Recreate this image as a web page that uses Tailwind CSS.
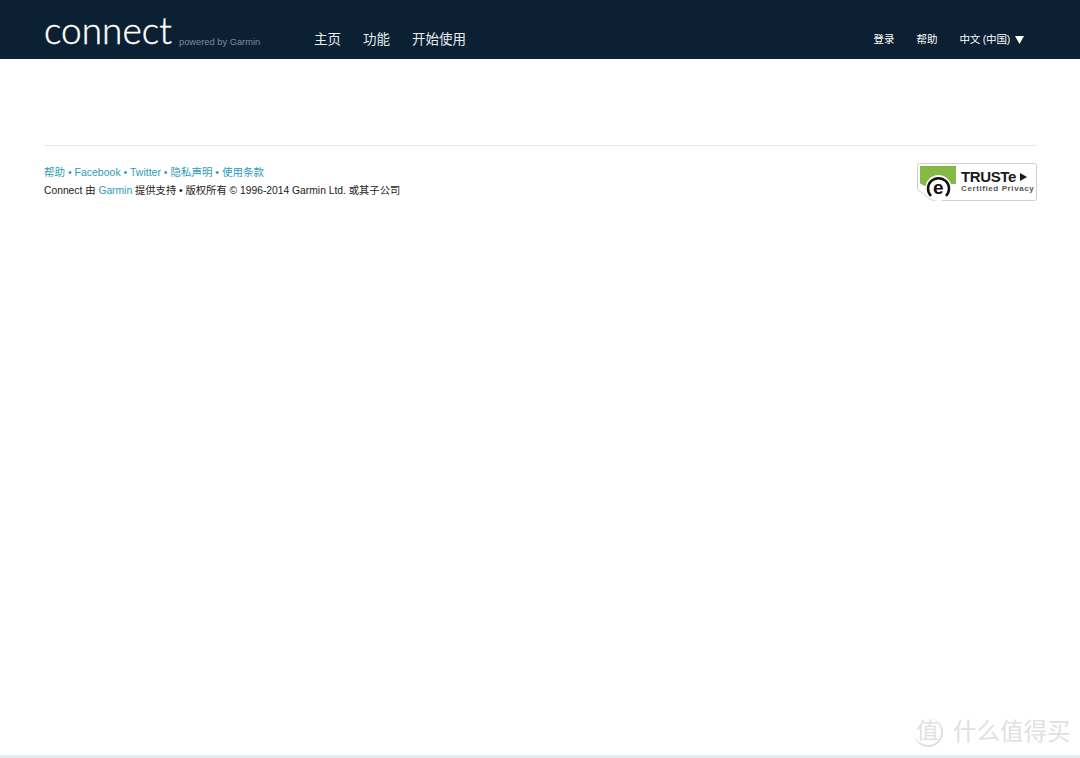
<!DOCTYPE html>
<html lang="zh-CN">
<head>
    <meta charset="UTF-8">
    <title>Garmin Connect</title>
    <script src="https://cdn.jsdelivr.net/npm/@tailwindcss/browser@4"></script>
</head>
<body class="relative flex flex-col h-[758px] w-[1080px] overflow-hidden bg-white font-['Liberation_Sans','Noto_Sans_CJK_SC',sans-serif] text-[10.5px] text-[#1a1a1a]">

    <!-- header -->
    <header class="flex items-center h-[59px] bg-[#0b2032] text-white shrink-0 pl-[44px] pr-[56px] pt-[20px]">
        <a href="#" class="flex items-baseline w-[270px] h-[40px] -mt-[20px]">
            <span class="font-['Lato',sans-serif] font-light text-[37px] leading-[40px] w-[135px] [-webkit-text-stroke:0.4px_white]">connect</span>
            <span class="text-[9.300px] text-[#7f8c96] translate-y-[1px]">powered by Garmin</span>
        </a>
        <nav class="flex gap-[22px] text-[13.5px] text-[#e8ecef] mt-[2px]">
            <a href="#">主页</a>
            <a href="#">功能</a>
            <a href="#">开始使用</a>
        </nav>
        <div class="flex items-center gap-[22px] ml-auto">
            <a href="#">登录</a>
            <a href="#">帮助</a>
            <a href="#" class="flex items-center gap-[5px] tracking-[-0.2px]">
                中文 (中国)
                <svg width="9" height="8" viewBox="0 0 9 8"><polygon points="0,0 9,0 4.5,8" fill="#fff"/></svg>
            </a>
        </div>
    </header>

    <!-- footer block -->
    <main class="mx-[44px] mt-[86px] w-[993px] border-t border-[#e8e8e8] flex justify-between pt-[17px]">
        <div class="flex flex-col gap-[7px] leading-[12px] pt-[3px]">
            <p class="text-[#2d9bb8]">
                <a href="#">帮助</a> • <a href="#">Facebook</a> • <a href="#">Twitter</a> • <a href="#">隐私声明</a> • <a href="#">使用条款</a>
            </p>
            <p class="text-[10.300px]">Connect 由 <a href="#" class="text-[#2d9bb8]">Garmin</a> 提供支持 • 版权所有 © 1996-2014 Garmin Ltd. 或其子公司</p>
        </div>
        <!-- TRUSTe badge -->
        <div class="relative w-[120px] h-[39px]">
            <svg class="absolute inset-0" width="120" height="39" viewBox="0 0 120 39">
                <path d="M0.500 2.500a2 2 0 0 1 2-2h115a2 2 0 0 1 2 2v33a2 2 0 0 1-2 2H17l-4-1-3-3-9.500-7z" fill="#fff" stroke="#cfcfcf"/>
                <path d="M3 3h36v18h-6a14 14 0 0 0-23 3l-7-3.500z" fill="#84b944"/>
                <circle cx="21.500" cy="25" r="13" fill="#fff"/>
                <path d="M14 33a10.500 10.500 0 1 1 15 0" fill="none" stroke="#111" stroke-width="2.500"/>
            </svg>
            <span class="absolute left-[16px] top-[15px] font-bold text-[19px] leading-[20px] text-[#111]">e</span>
            <span class="absolute left-[44px] top-[5px] font-bold text-[15px] leading-[18px] tracking-[-0.4px] text-[#1a1a1a]">TRUSTe</span>
            <svg class="absolute left-[103px] top-[10px]" width="7" height="8" viewBox="0 0 7 8"><polygon points="0,0 7,4 0,8" fill="#1a1a1a"/></svg>
            <span class="absolute left-[44px] top-[21px] text-[8px] leading-[10px] font-bold tracking-[0.6px] text-[#555]">Certified Privacy</span>
        </div>
    </main>

    <!-- watermark -->
    <div class="absolute left-[914px] top-[717px] flex items-center gap-[10px] text-[#e0e0e0]">
        <span class="flex items-center justify-center w-[29px] h-[29px] rounded-full border-r-2 border-b-2 border-[#e0e0e0] text-[22px] leading-none">值</span>
        <span class="text-[23.500px] leading-[30px] whitespace-nowrap">什么值得买</span>
    </div>

    <div class="mt-auto h-[3px] bg-[#e3ecf1] shrink-0"></div>
</body>
</html>
